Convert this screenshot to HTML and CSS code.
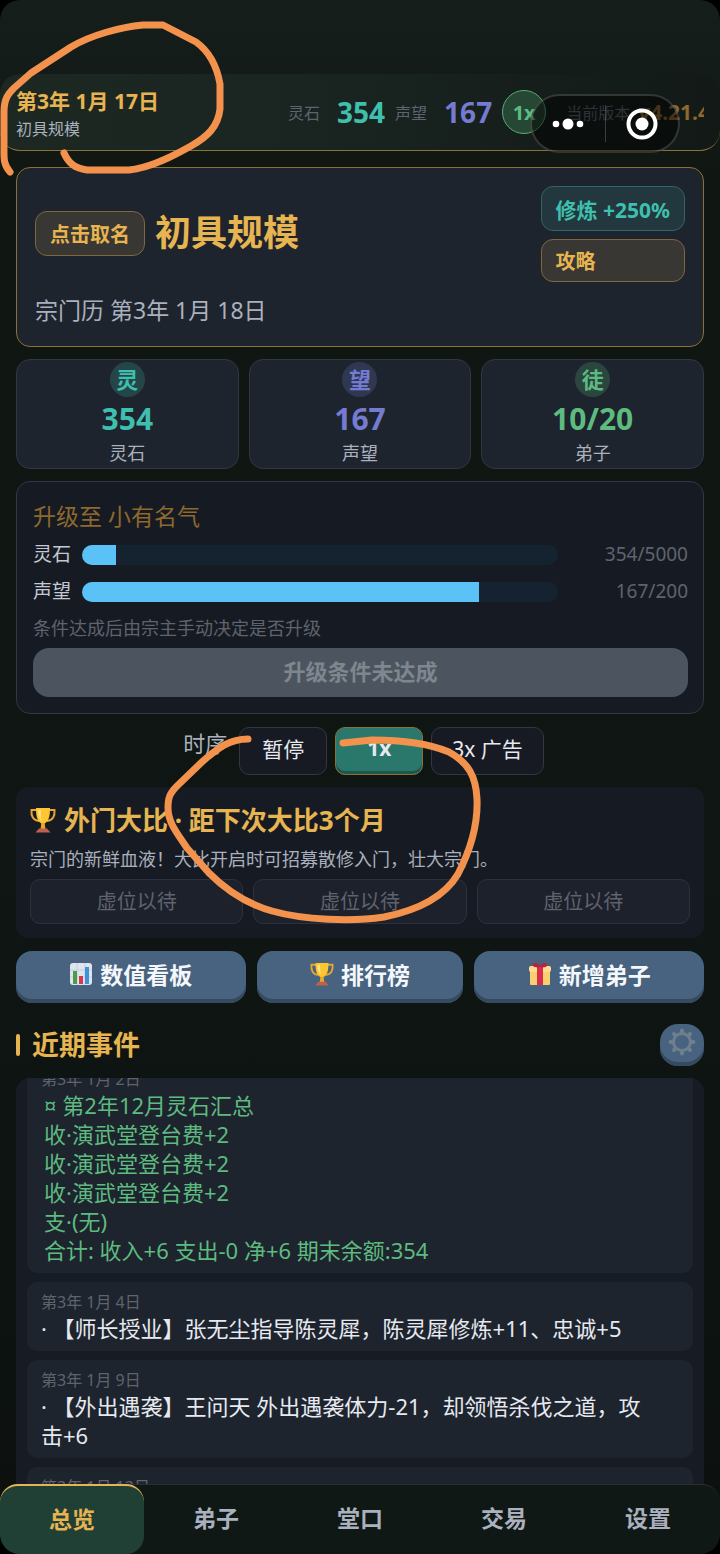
FILE: index.html
```html
<!DOCTYPE html>
<html lang="zh-CN">
<head>
<meta charset="utf-8">
<meta name="viewport" content="width=device-width, initial-scale=1">
<title>宗门总览</title>
<link rel="stylesheet" href="styles.css">
</head>
<body>
<svg class="defs" aria-hidden="true">
  <symbol id="trophy" viewBox="0 0 26 26">
    <path d="M7 3H1.500C1 9 3 13.500 9 14M19 3h5.500C25 9 23 13.500 17 14" fill="none" stroke="#e8a431" stroke-width="2"/>
    <path d="M6 1h14c0 8-1 13-5.500 15.500V22h-3v-5.500C7 14 6 9 6 1z" fill="#fdc52f"/>
    <path d="M8 3h3c0 5 0 8 1 11C9 12 8 8 8 3z" fill="#ffe07a"/>
    <path d="M11.500 16h3l1 6h-5z" fill="#eda52c"/>
    <path d="M9 21.500h8l3.500 4h-15z" fill="#bd604c"/>
  </symbol>
  <symbol id="gear" viewBox="0 0 28 28">
    <g stroke="#6f7f8e" fill="none">
      <circle cx="14" cy="14" r="8.500" stroke-width="3"/>
      <path stroke-width="4" stroke-linecap="round" d="M14 4V2.500M14 24v1.500M4 14H2.500M24 14h1.500M6.900 6.900L6 6M21.100 21.100l.9.900M6.900 21.100L6 22M21.100 6.900L22 6"/>
    </g>
  </symbol>
</svg>
<div class="app">
  <header class="topbar">
    <div class="topbar-left">
      <strong class="topbar-date">第3年 1月 17日</strong>
      <span class="topbar-rank">初具规模</span>
    </div>
    <div class="topbar-right">
      <span class="key">灵石</span><b class="num teal">354</b>
      <span class="key">声望</span><b class="num violet">167</b>
      <button class="speed-badge" type="button">1x</button>
      <span class="key">当前版本</span><b class="version">v4.21.4</b>
    </div>
  </header>

  <main class="content">
    <section class="card sect">
      <div class="sect-info">
        <div class="sect-name">
          <button class="chip gold" type="button">点击取名</button>
          <h1>初具规模</h1>
        </div>
        <p class="sect-date">宗门历 第3年 1月 18日</p>
      </div>
      <div class="sect-actions">
        <button class="chip cyan" type="button">修炼 +250%</button>
        <button class="chip gold" type="button">攻略</button>
      </div>
    </section>

    <section class="stats">
      <div class="card stat teal"><span class="stat-icon">灵</span><b>354</b><span class="stat-label">灵石</span></div>
      <div class="card stat violet"><span class="stat-icon">望</span><b>167</b><span class="stat-label">声望</span></div>
      <div class="card stat green"><span class="stat-icon">徒</span><b>10/20</b><span class="stat-label">弟子</span></div>
    </section>

    <section class="card upgrade">
      <h2>升级至 小有名气</h2>
      <div class="meter"><span>灵石</span><div class="track"><div class="fill" style="width:7.08%"></div></div><span class="value">354/5000</span></div>
      <div class="meter"><span>声望</span><div class="track"><div class="fill" style="width:83.5%"></div></div><span class="value">167/200</span></div>
      <p>条件达成后由宗主手动决定是否升级</p>
      <button class="upgrade-btn" type="button" disabled>升级条件未达成</button>
    </section>

    <div class="pace">
      <span class="pace-label">时序</span>
      <button type="button">暂停</button>
      <button class="on" type="button">1x</button>
      <button type="button">3x 广告</button>
    </div>

    <section class="contest">
      <h2><svg class="icon-lg"><use href="#trophy"/></svg>外门大比 · 距下次大比3个月</h2>
      <p>宗门的新鲜血液！大比开启时可招募散修入门，壮大宗门。</p>
      <div class="slots">
        <div>虚位以待</div><div>虚位以待</div><div>虚位以待</div>
      </div>
    </section>

    <div class="actions">
      <button type="button">
        <svg class="icon" viewBox="0 0 24 24"><rect x="1" y="1" width="22" height="22" rx="3" fill="#dfe5ee"/><path d="M1 8h22M1 15h22M8 1v22M16 1v22" stroke="#c3cede"/><path d="M4 9h4v13H4z" fill="#4d9c4c"/><path d="M10 14h4v8h-4z" fill="#d8394c"/><path d="M16 5h4v17h-4z" fill="#3d94d8"/></svg>数值看板</button>
      <button type="button"><svg class="icon"><use href="#trophy"/></svg>排行榜</button>
      <button type="button">
        <svg class="icon" viewBox="0 0 24 24"><path d="M2 9h20v13a1 1 0 0 1-1 1H3a1 1 0 0 1-1-1z" fill="#fbce72"/><rect x="1" y="4" width="22" height="6" rx="2" fill="#ffdc8d"/><path d="M9 4h6v19H9z" fill="#d62e4b"/><path d="M12 5C8 6 4 5 5 2c1-2 5-1 7 2 2-3 6-4 7-2 1 3-3 4-7 3z" fill="#b9213f"/></svg>新增弟子</button>
    </div>

    <div class="events-head">
      <h2>近期事件</h2>
      <button class="gear" type="button" aria-label="事件设置"><svg><use href="#gear"/></svg></button>
    </div>

    <section class="events">
      <div class="events-scroll">
        <article class="summary">
          <time>第3年 1月 2日</time>
          <p>¤ 第2年12月灵石汇总<br>收·演武堂登台费+2<br>收·演武堂登台费+2<br>收·演武堂登台费+2<br>支·(无)<br>合计: 收入+6 支出-0 净+6 期末余额:354</p>
        </article>
        <article><time>第3年 1月 4日</time><p>· 【师长授业】张无尘指导陈灵犀，陈灵犀修炼+11、忠诚+5</p></article>
        <article><time>第3年 1月 9日</time><p>· 【外出遇袭】王问天 外出遇袭体力-21，却领悟杀伐之道，攻<span class="keep">击+6</span></p></article>
        <article><time>第3年 1月 13日</time></article>
      </div>
    </section>
  </main>

  <nav class="tabs">
    <a class="active" href="#overview">总览</a>
    <a href="#disciples">弟子</a>
    <a href="#halls">堂口</a>
    <a href="#trade">交易</a>
    <a href="#settings">设置</a>
  </nav>

  <div class="capsule">
    <button type="button" aria-label="更多"><svg viewBox="0 0 34 14"><g fill="#fff"><circle cx="4" cy="7" r="3.300"/><circle cx="16" cy="7" r="5.500"/><circle cx="28" cy="7" r="3.300"/></g></svg></button>
    <button type="button" aria-label="关闭"><svg viewBox="0 0 34 34"><circle cx="17" cy="17" r="13.500" fill="none" stroke="#fff" stroke-width="4"/><circle cx="17" cy="17" r="6.500" fill="#fff"/></svg></button>
  </div>

  <svg class="marks" viewBox="0 0 720 1554" aria-hidden="true">
    <path d="M10 172C3 164 4 158 4 145V112C4 99 8 94 14 88L31 73L71 47C91 35 121 27 143 25H163L196 42C210 52 217 67 220 84V109C218 127 207 137 191 146C175 155 151 168 129 170H87C75 168 69 164 64 153"/>
    <path d="M248 739C227 739 215 751 203 761L177 786C169 794 168 799 168 808C168 823 178 834 187 848L209 873C227 891 247 904 272 911C304 920 352 922 384 917C419 910 445 896 458 874C472 847 478 823 477 799C476 777 469 763 449 752C425 742 391 740 372 740L343 743"/>
  </svg>
</div>
</body>
</html>
```

FILE: styles.css
```css
:root {
  --gold: #e6b450;
  --teal: #3fbfad;
  --violet: #747bd0;
  --green: #5dbb80;
  --panel: #1e242d;
  --panel-dark: #161b23;
  --line: #323743;
  --muted: #5f636e;
  --soft: #aab0bd;
}

* { box-sizing: border-box; }

body {
  margin: 0;
  background: #000;
  color: #e6e9f0;
  font-family: "Noto Sans", "Noto Sans CJK SC", sans-serif;
}

h1, h2, p { margin: 0; }

button {
  margin: 0;
  padding: 0;
  border: 0;
  font-family: inherit;
  color: inherit;
  cursor: pointer;
}

.defs { position: absolute; width: 0; height: 0; }
.teal { color: var(--teal); }
.violet { color: var(--violet); }
.green { color: var(--green); }

.app {
  position: relative;
  display: flex;
  flex-direction: column;
  height: 100vh;
  padding-top: 74px;
  overflow: hidden;
  border-radius: 20px;
  background: linear-gradient(#161e1b, #101713 12%, #0e1512 60%, #0c1110);
}

/* top bar */
.topbar {
  display: grid;
  grid-template-columns: 272px minmax(0, 1fr);
  align-items: center;
  height: 77px;
  flex: none;
  padding: 0 16px;
  border-bottom: 1px solid #8a7236;
  border-radius: 20px;
  background: linear-gradient(90deg, #1d2823, #1a2521 40%, #121916);
}
.topbar-left { display: flex; flex-direction: column; gap: 2px; padding-top: 4px; }
.topbar-date { font-size: 21px; line-height: 28px; color: var(--gold); }
.topbar-rank { font-size: 16px; line-height: 24px; color: var(--soft); }
.topbar-right {
  display: flex;
  align-items: center;
  overflow: hidden;
  white-space: nowrap;
}
.key { flex: none; font-size: 16px; color: var(--muted); }
.num { flex: none; margin: 0 10px 0 17px; font-size: 28px; line-height: 44px; }
.speed-badge {
  flex: none;
  width: 44px;
  height: 44px;
  margin-right: 20px;
  border: 1px solid #57ac78;
  border-radius: 50%;
  background: #264734;
  color: var(--green);
  font-size: 20px;
  font-weight: 700;
}
.version { margin-left: 8px; font-size: 21px; color: #8e682c; }

.content {
  display: flex;
  flex-direction: column;
  flex: 1;
  min-height: 0;
  gap: 12px;
  padding: 16px 16px 0;
}

.card {
  border: 1px solid var(--line);
  border-radius: 14px;
  background: var(--panel);
}

/* sect summary */
.sect {
  display: flex;
  justify-content: space-between;
  height: 180px;
  flex: none;
  padding: 18px;
  border-color: #8a7236;
}
.sect-info { display: flex; flex-direction: column; justify-content: space-between; padding-top: 20px; }
.sect-name { display: flex; align-items: center; gap: 10px; }
.sect-name h1 { font-size: 36px; line-height: 54px; color: var(--gold); }
.sect-date { font-size: 23px; line-height: 36px; color: var(--soft); }
.sect-actions { display: flex; flex-direction: column; gap: 8px; }
.chip {
  height: 45px;
  padding: 0 14px;
  border: 1px solid;
  border-radius: 12px;
  font-size: 20px;
  font-weight: 700;
  text-align: left;
}
.chip.gold { border-color: #7d693c; background: #393733; color: var(--gold); }
.chip.cyan { border-color: #2f6666; background: #23373e; color: var(--teal); font-size: 21px; }
.sect-actions .gold { height: 43px; }

/* counters */
.stats { display: grid; grid-template-columns: repeat(3, 1fr); gap: 10px; }
.stat { display: flex; flex-direction: column; align-items: center; padding: 2px 0 3px; }
.stat-icon {
  width: 35px;
  height: 35px;
  border-radius: 50%;
  font-size: 22px;
  font-weight: 700;
  line-height: 35px;
  text-align: center;
  background: color-mix(in srgb, currentColor 22%, transparent);
}
.stat b { font-size: 30px; line-height: 44px; }
.stat-label { font-size: 18px; line-height: 24px; color: var(--soft); }

/* upgrade panel */
.upgrade { padding: 14px 15px 16px 16px; background: var(--panel-dark); }
.upgrade h2 { font-size: 23px; font-weight: 400; line-height: 40px; color: #8e682c; }
.meter {
  display: grid;
  grid-template-columns: 40px 1fr 121px;
  align-items: center;
  column-gap: 9px;
  font-size: 19px;
  line-height: 37px;
  color: #c3c8d2;
}
.track { height: 20px; overflow: hidden; border-radius: 10px; background: #15222f; }
.fill { height: 100%; background: #5bc2f7; }
.value { text-align: right; color: var(--muted); }
.upgrade p { padding-bottom: 2px; font-size: 18px; line-height: 36px; color: var(--muted); }
.upgrade-btn {
  display: block;
  width: 100%;
  height: 49px;
  padding-bottom: 6px;
  border-radius: 16px;
  background: #4c555f;
  color: #7e868e;
  font-size: 22px;
  font-weight: 700;
}

/* time speed */
.pace { display: flex; justify-content: center; gap: 8px; margin-top: 1px; padding-left: 7px; font-size: 22px; }
.pace-label { margin-right: 4px; line-height: 32px; color: var(--soft); }
.pace button {
  min-width: 88px;
  height: 48px;
  padding: 0 20px 6px;
  border: 1px solid var(--line);
  border-radius: 10px;
  background: #171a23;
  font-size: 21px;
}
.pace .on {
  border-color: #8a7236;
  background: #2a776c;
  box-shadow: inset 0 -3px #20544e;
  font-weight: 700;
}

/* contest */
.contest { padding: 14px; border-radius: 12px; background: #161b23; }
.contest h2 { display: flex; align-items: center; gap: 8px; font-size: 26px; line-height: 38px; color: var(--gold); }
.contest p { font-size: 18px; line-height: 40px; color: var(--soft); }
.icon-lg { width: 26px; height: 26px; }
.slots { display: grid; grid-template-columns: repeat(3, 1fr); gap: 10px; }
.slots div {
  border: 1px solid #2c313d;
  border-radius: 10px;
  background: #1d212b;
  font-size: 20px;
  line-height: 43px;
  text-align: center;
  color: var(--muted);
}

/* actions */
.actions { display: flex; gap: 11px; margin-top: 1px; }
.actions button {
  display: flex;
  flex: 1 1 auto;
  align-items: center;
  justify-content: center;
  gap: 7px;
  height: 52px;
  padding-bottom: 6px;
  border-radius: 16px;
  background: #47637f;
  box-shadow: inset 0 -4px #354a5e;
  color: #f4f7fb;
  font-size: 23px;
  font-weight: 700;
}
.icon { width: 24px; height: 24px; }

/* events */
.events-head { display: flex; align-items: center; justify-content: space-between; margin-top: 9px; }
.events-head h2 {
  display: flex;
  align-items: center;
  gap: 12px;
  font-size: 27px;
  line-height: 40px;
  color: var(--gold);
}
.events-head h2::before { content: ""; width: 4px; height: 22px; border-radius: 2px; background: var(--gold); }
.gear {
  display: flex;
  justify-content: center;
  width: 44px;
  height: 42px;
  padding-top: 4px;
  border-radius: 18px;
  background: #47637f;
  box-shadow: inset 0 -4px #354a5e;
}
.gear svg { width: 28px; height: 28px; }
.events {
  flex: 1;
  min-height: 0;
  overflow: hidden;
  padding: 0 11px;
  border-radius: 14px 14px 0 0;
  background: #171b24;
}
.events-scroll { display: flex; flex-direction: column; gap: 9px; margin-top: -19px; }
.events article {
  padding: 8px 14px;
  border-radius: 10px;
  background: var(--panel);
}
.events time { display: block; font-size: 16px; line-height: 24px; color: var(--muted); }
.events p { font-size: 22px; line-height: 29px; }
.events .summary p { padding-left: 3px; color: var(--green); }
.keep { white-space: nowrap; }

/* bottom tabs */
.tabs {
  display: grid;
  grid-template-columns: repeat(5, 1fr);
  flex: none;
  height: 70px;
  border-top: 1px solid #2a302f;
  border-radius: 18px;
  background: #101816;
}
.tabs a {
  color: var(--soft);
  font-size: 23px;
  font-weight: 700;
  line-height: 66px;
  text-align: center;
  text-decoration: none;
}
.tabs .active {
  margin-top: -1px;
  border-top: 2px solid var(--gold);
  border-radius: 18px;
  background: #214035;
  color: var(--gold);
}

/* floating system capsule */
.capsule {
  position: absolute;
  top: 94px;
  right: 40px;
  display: grid;
  grid-template-columns: 1fr 1fr;
  align-items: center;
  width: 150px;
  height: 59px;
  border: 2px solid rgba(255, 255, 255, .17);
  border-radius: 30px;
  background: rgba(0, 0, 0, .5);
}
.capsule button { display: flex; justify-content: center; align-items: center; height: 37px; background: none; }
.capsule button + button { border-left: 1px solid rgba(255, 255, 255, .2); }
.capsule svg { width: 34px; }

/* hand-drawn highlights */
.marks {
  position: absolute;
  top: 0;
  left: 0;
  width: 100%;
  pointer-events: none;
  fill: none;
  stroke: #f3924c;
  stroke-width: 7;
  stroke-linecap: round;
  stroke-linejoin: round;
}
```
